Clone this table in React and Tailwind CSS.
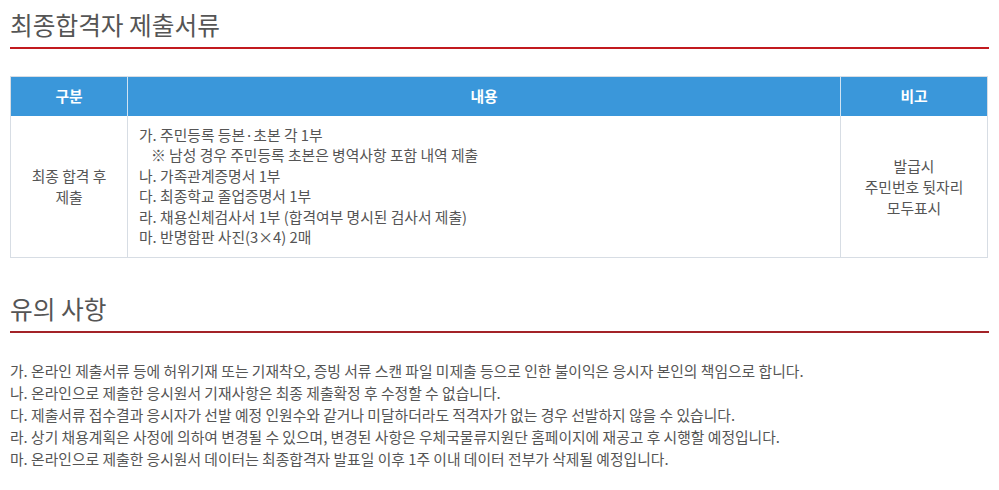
const CONTENT = [
  '가. 주민등록 등본·초본 각 1부',
  '※ 남성 경우 주민등록 초본은 병역사항 포함 내역 제출',
  '나. 가족관계증명서 1부',
  '다. 최종학교 졸업증명서 1부',
  '라. 채용신체검사서 1부 (합격여부 명시된 검사서 제출)',
  '마. 반명함판 사진(3×4) 2매',
];

const NOTES = [
  '가. 온라인 제출서류 등에 허위기재 또는 기재착오, 증빙 서류 스캔 파일 미제출 등으로 인한 불이익은 응시자 본인의 책임으로 합니다.',
  '나. 온라인으로 제출한 응시원서 기재사항은 최종 제출확정 후 수정할 수 없습니다.',
  '다. 제출서류 접수결과 응시자가 선발 예정 인원수와 같거나 미달하더라도 적격자가 없는 경우 선발하지 않을 수 있습니다.',
  '라. 상기 채용계획은 사정에 의하여 변경될 수 있으며, 변경된 사항은 우체국물류지원단 홈페이지에 재공고 후 시행할 예정입니다.',
  '마. 온라인으로 제출한 응시원서 데이터는 최종합격자 발표일 이후 1주 이내 데이터 전부가 삭제될 예정입니다.',
];

function SectionTitle({ children, line }) {
  return (
    <h2 className={`text-[24.7px] leading-[32px] text-[#555] font-normal pb-[7px] border-b-2 ${line}`}>
      {children}
    </h2>
  );
}

export default function App() {
  return (
    <div
      className="bg-white w-[999px] h-[490px] px-[10px] pt-[8px] text-[#555]"
      style={{ fontFamily: '"Noto Sans CJK KR", "Noto Sans", sans-serif' }}
    >
      <SectionTitle line="border-[#c21a1f]">최종합격자 제출서류</SectionTitle>

      <table className="mt-[27px] w-[978px] border-collapse border border-[#d7dde4] text-[14.8px]">
        <thead>
          <tr className="bg-[#3a97da] text-white h-[39px]">
            <th className="w-[117px] font-bold border-r border-[#cfe3f3]">구분</th>
            <th className="font-bold border-r border-[#cfe3f3]">내용</th>
            <th className="w-[147px] font-bold">비고</th>
          </tr>
        </thead>
        <tbody>
          <tr className="h-[142px]">
            <td className="text-center leading-[21px] border-r border-[#d7dde4]">
              최종 합격 후<br />제출
            </td>
            <td className="pl-[11px] py-[9px] leading-[20.4px] border-r border-[#d7dde4]">
              {CONTENT.map((c, i) => (
                <div key={i} className={c.startsWith('※') ? 'pl-[12px]' : ''}>{c}</div>
              ))}
            </td>
            <td className="text-center leading-[21px]">
              발급시<br />주민번호 뒷자리<br />모두표시
            </td>
          </tr>
        </tbody>
      </table>

      <div className="mt-[34px]">
        <SectionTitle line="border-[#a32328]">유의 사항</SectionTitle>
      </div>

      <ul className="mt-[27px] text-[14.8px] leading-[22px]">
        {NOTES.map((n, i) => (
          <li key={i}>{n}</li>
        ))}
      </ul>
    </div>
  );
}
